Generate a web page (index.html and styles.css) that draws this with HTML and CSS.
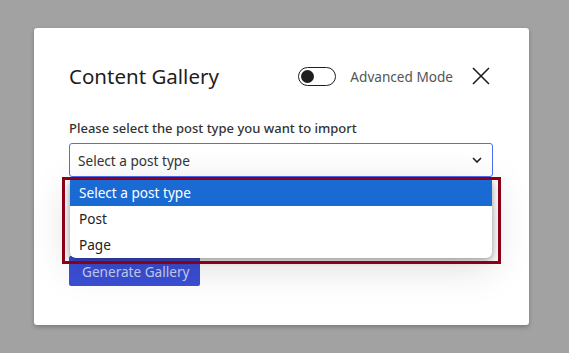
FILE: index.html
```html
<!DOCTYPE html>
<html>
<head>
<meta charset="utf-8">
<link rel="stylesheet" href="styles.css">
</head>
<body>
<div class="modal">
  <div class="header">
    <h1 class="title">Content Gallery</h1>
    <div class="actions">
      <span class="toggle"><span class="knob"></span></span>
      <span class="adv">Advanced Mode</span>
      <svg class="close" width="18" height="18" viewBox="0 0 18 18"><path d="M1 1 L17 17 M17 1 L1 17" stroke="#1e1e1e" stroke-width="1.6" fill="none"/></svg>
    </div>
  </div>
  <label class="label">Please select the post type you want to import</label>
  <div class="select-wrap">
    <div class="select">
      <span>Select a post type</span>
      <svg class="chev" width="10" height="6" viewBox="0 0 10 6"><path d="M1 1 L5 5 L9 1" stroke="#1e1e1e" stroke-width="1.6" fill="none"/></svg>
    </div>
    <ul class="dropdown">
      <li class="opt active">Select a post type</li>
      <li class="opt">Post</li>
      <li class="opt">Page</li>
    </ul>
    <div class="frame"></div>
  </div>
  <button class="btn">Generate Gallery</button>
</div>
</body>
</html>
```
FILE: styles.css
```css
* { box-sizing: border-box; }
html, body { margin: 0; padding: 0; }
body {
  background: #a2a2a2;
  width: 569px;
  height: 353px;
  overflow: hidden;
  font-family: "Noto Sans", "Open Sans", sans-serif;
  padding: 28px 0 0 34px;
}
.modal {
  width: 495px;
  height: 297px;
  background: #fff;
  border-radius: 3px;
  box-shadow: 0 2px 4px rgba(0,0,0,0.25);
  padding: 0 36px 0 35px;
  display: flex;
  flex-direction: column;
}
.header {
  display: flex;
  align-items: center;
  justify-content: space-between;
  height: 0;
  margin-top: 48px;
}
.title {
  margin: 0;
  font-size: 20.5px;
  font-weight: 400;
  color: #1e1e1e;
}
.actions { display: flex; align-items: center; margin-right: 3px; }
.toggle {
  width: 38px;
  height: 19px;
  border: 1.5px solid #1e1e1e;
  border-radius: 10px;
  display: flex;
  align-items: center;
  padding-left: 2px;
}
.knob { width: 13px; height: 13px; border-radius: 50%; background: #1e1e1e; }
.adv { margin-left: 14px; font-size: 13.6px; color: #555; }
.close { margin-left: 19px; }
.label {
  margin-top: 44px;
  font-size: 13px;
  font-weight: 500;
  color: #333;
  line-height: 16px;
}
.select-wrap { position: relative; margin-top: 7px; }
.select {
  height: 34px;
  border: 1px solid #4f6df5;
  border-radius: 3px;
  display: flex;
  align-items: center;
  justify-content: space-between;
  padding: 0 9px 0 8px;
  font-size: 13.6px;
  color: #333;
}
.chev { margin-right: 1px; }
.dropdown {
  position: absolute;
  left: 1px;
  right: 1px;
  top: 37px;
  margin: 0;
  padding: 0;
  list-style: none;
  background: #fff;
  border-radius: 0 0 6px 6px;
  box-shadow: 0 2px 6px rgba(0,0,0,0.35), 0 8px 40px rgba(0,0,0,0.15);
  overflow: hidden;
  z-index: 2;
}
.opt {
  height: 26px;
  line-height: 26px;
  padding-left: 9px;
  font-size: 13.6px;
  color: #222;
}
.opt.active { background: #1a6ad4; color: #fff; }
.frame {
  position: absolute;
  left: -7px;
  top: 34px;
  width: 439px;
  height: 87px;
  border: 3px solid #8b0016;
  z-index: 3;
}
.btn {
  align-self: flex-start;
  margin-top: 79px;
  width: 131px;
  height: 30px;
  border: 0;
  border-radius: 2px;
  background: #3a4fd4;
  color: #c9d0f2;
  font-family: inherit;
  font-size: 13.6px;
  text-align: left;
  padding: 0 0 0 13px;
}
```
